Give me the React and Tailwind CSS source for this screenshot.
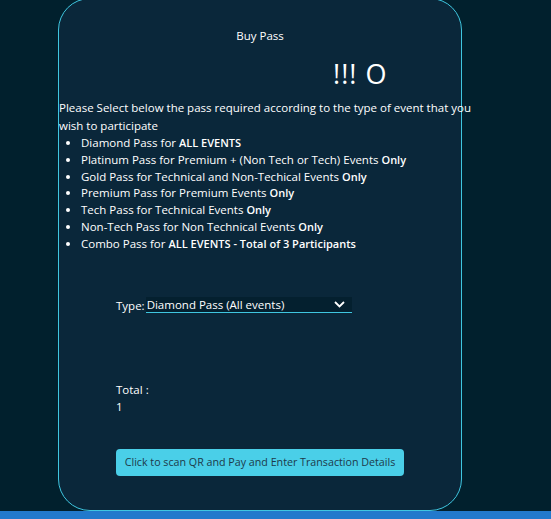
import React from "react";

const passes = [
  { text: "Diamond Pass for ", bold: "ALL EVENTS" },
  { text: "Platinum Pass for Premium + (Non Tech or Tech) Events ", bold: "Only" },
  { text: "Gold Pass for Technical and Non-Techical Events ", bold: "Only" },
  { text: "Premium Pass for Premium Events ", bold: "Only" },
  { text: "Tech Pass for Technical Events ", bold: "Only" },
  { text: "Non-Tech Pass for Non Technical Events ", bold: "Only" },
  { text: "Combo Pass for ", bold: "ALL EVENTS - Total of 3 Participants" },
];

export default function App() {
  return (
    <div className="h-[519px] overflow-hidden bg-[#01202d] flex flex-col font-['Open_Sans',sans-serif] text-[11.5px] text-white">
      <div className="flex-1 pl-[58px]">
        <div className="w-[404px] h-[513px] -mt-[2px] rounded-[32px] border border-[#3fc6e0] bg-[#0a273a] flex flex-col">
          <div className="mt-[28px] text-center leading-[17px]">Buy Pass</div>
          <div className="mt-[14px] pl-[274px] text-[27px] font-medium leading-[32px] tracking-[1px]">!!! O</div>
          <div className="mt-[9px] w-[420px] leading-[18px] whitespace-nowrap">
            <p>Please Select below the pass required according to the type of event that you</p>
            <p>wish to participate</p>
          </div>
          <ul className="list-disc pl-[22px] leading-[16.8px] marker:text-white">
            {passes.map((p) => (
              <li key={p.bold + p.text}>
                {p.text}
                <b className="font-semibold text-[11px]">{p.bold}</b>
              </li>
            ))}
          </ul>
          <div className="mt-[44px] pl-[57px] flex items-center gap-[1px]">
            <span>Type:</span>
            <div className="w-[206px] h-[16px] bg-[#04202f] border-b border-[#3fc6e0] flex items-center justify-between pl-[1px] pr-[7px]">
              <span className="leading-[14px]">Diamond Pass (All events)</span>
              <svg width="11" height="7" viewBox="0 0 11 7" fill="none">
                <path d="M1 1l4.5 4.5L10 1" stroke="white" strokeWidth="1.8" />
              </svg>
            </div>
          </div>
          <div className="mt-[67px] pl-[57px] leading-[17px]">
            <div>Total :</div>
            <div>1</div>
          </div>
          <div className="mt-[34px] pl-[57px]">
            <button className="w-[288px] h-[27px] rounded-[4px] bg-[#4acfe8] text-[#1d3a4a] text-[10.7px] whitespace-nowrap">
              Click to scan QR and Pay and Enter Transaction Details
            </button>
          </div>
        </div>
      </div>
      <div className="h-[8px] bg-[#2279cc] shrink-0" />
    </div>
  );
}
